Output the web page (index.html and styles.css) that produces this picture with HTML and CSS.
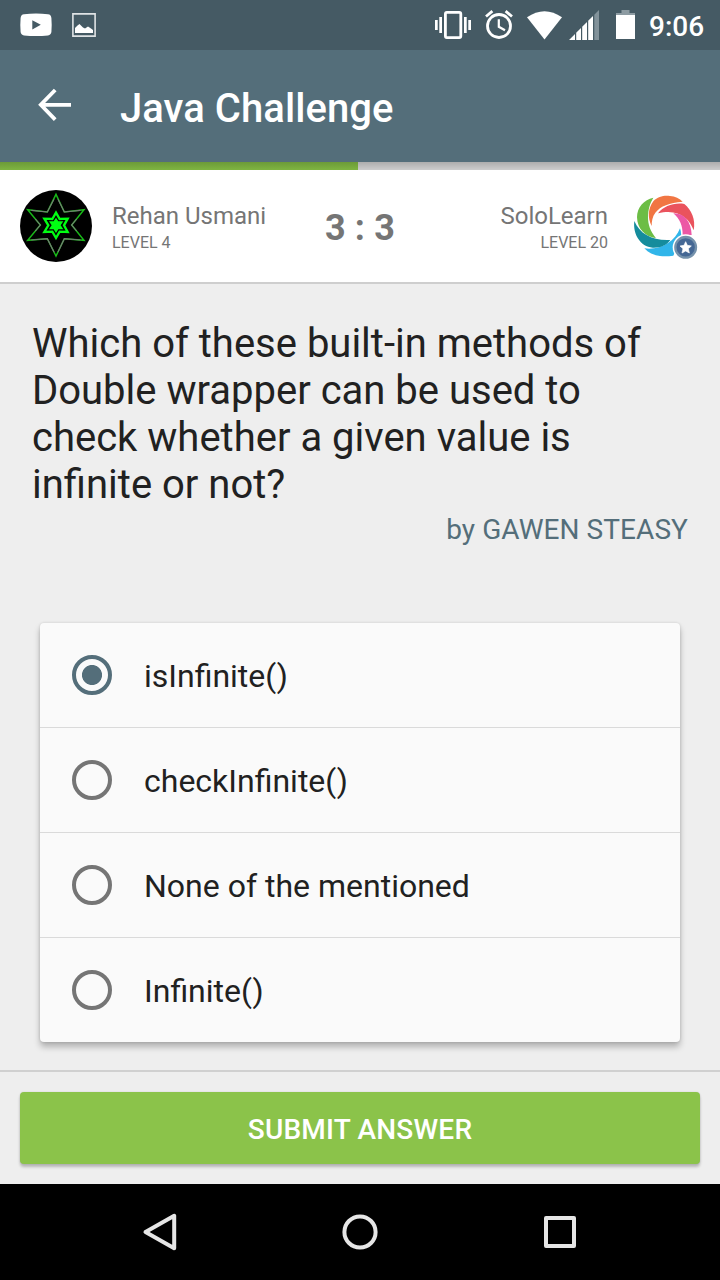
FILE: index.html
```html
<!DOCTYPE html>
<html lang="en">
<head>
<meta charset="utf-8">
<title>Java Challenge</title>
<link rel="stylesheet" href="styles.css">
</head>
<body>
<div class="status-bar">
  <svg class="icon-video" width="32" height="24" viewBox="0 0 32 24"><path fill="#fff" fill-rule="evenodd" d="M4 1.2Q16 0 28 1.2Q31 1.5 31.4 5Q32 12 31.4 19Q31 22 28 22.4Q16 23.4 4 22.4Q1 22 .6 19Q0 12 .6 5Q1 1.5 4 1.2ZM12.3 7.3V16.5L20.8 11.8Z"/></svg>
  <svg class="icon-picture" width="24" height="24" viewBox="0 0 24 24"><path fill="none" stroke="#dfe3e5" stroke-width="1.6" d="M.9.9H23.1V23.1H.9Z"/><path fill="#fff" d="M3 20V15L5.5 12.5L7.5 11L11 14.5L13 15.5L16 13.5L19 15.5L21 17V20Z"/></svg>
  <div class="status-right">
    <svg class="icon-vibrate" width="36" height="28" viewBox="0 0 36 28"><rect x="10.4" y="1.4" width="15.4" height="25.2" rx="1.5" fill="none" stroke="#fff" stroke-width="2.8"/><path fill="#fff" d="M0 9H2.7V19H0ZM4.3 6H7V22H4.3ZM29 6H31.7V22H29ZM33.3 9H36V19H33.3Z"/></svg>
    <svg class="icon-alarm" width="28" height="29" viewBox="0 0 28 29"><g fill="none" stroke="#fff"><circle cx="14" cy="16" r="11.5" stroke-width="2.8"/><path stroke-width="2.2" d="M13.8 9.2V16.8L20 20.3"/><path stroke-width="2.8" d="M1 6.5L7.4 1.2M20.6 1.2L27 6.5"/></g></svg>
    <svg class="icon-wifi" width="35" height="29" viewBox="0 0 35 29"><path fill="#fff" d="M0 6.2Q17.5-5.8 35 6.2L17.5 28.5Z"/></svg>
    <svg class="icon-signal" width="30" height="30" viewBox="0 0 30 30"><path fill="#fff" d="M0 30L6 24V30ZM7.2 22.8L12 18V30H7.2ZM13.2 16.8L18 12V30H13.2ZM19.2 10.8L24 6V30H19.2Z"/><path fill="#82929a" d="M25.3 4.7L30 0V30H25.3Z"/></svg>
    <svg class="icon-battery" width="19" height="30" viewBox="0 0 19 30"><path fill="#8d9ba2" d="M5.5 0H13.5V3H19V5.5H0V3H5.5Z"/><path fill="#fff" d="M0 5H19V29H0Z"/></svg>
    <span class="clock">9:06</span>
  </div>
</div>
<header class="app-bar">
  <svg class="icon-back" width="33" height="34" viewBox="0 0 33 34"><path fill="none" stroke="#fff" stroke-width="3.8" d="M17.2 2L2.8 16.8L17.2 31.6M3 16.8H33"/></svg>
  <h1 class="title">Java Challenge</h1>
</header>
<div class="progress"><div class="progress-fill"></div></div>
<section class="scoreboard">
  <svg class="avatar" width="72" height="72" viewBox="30 30 216 216">
    <circle cx="138" cy="138" r="108" fill="#000"/>
    <g fill="none" stroke-linejoin="miter">
      <path stroke="#18b818" stroke-width="4.5" d="M138 43L163 96L222 89L185 135L222 181L163 176L138 228L112 176L53 181L91 135L53 89L112 96Z"/>
      <path stroke="#777" stroke-width="3.4" d="M132 58L112 96L64 91M144 58L163 96L211 91M200 117L185 135L200 153M76 117L91 135L76 153M64 180L112 176L132 216M211 180L163 176L144 216"/>
      <path stroke="#00ff12" stroke-width="7" d="M138 98L149 117L173 116L162 136L173 156L149 155L138 174L127 155L103 156L115 136L103 116L127 117Z"/>
    </g>
    <path fill="#00ff12" d="M138 113L145 124L160 124L152 136L160 148L145 148L138 159L131 148L117 148L125 136L117 124L131 124Z"/>
  </svg>
  <div class="player">
    <div class="name">Rehan Usmani</div>
    <div class="level">LEVEL 4</div>
  </div>
  <div class="score">3 : 3</div>
  <div class="player player-right">
    <div class="name">SoloLearn</div>
    <div class="level">LEVEL 20</div>
  </div>
  <svg class="logo" width="68" height="68" viewBox="6 6 204 204">
    <path fill="#6cbd45" d="M70 23C42 29 21 51 21 82C22 118 46 140 78 145C61 123 54 105 54 82C54 58 60 40 70 23Z"/>
    <path fill="#f17643" d="M65 108C52 83 54 55 70 34C84 18 104 16 120 18C135 19 149 25 158 35C118 38 92 48 76 68C67 80 65 94 65 108Z"/>
    <path fill="#ea535d" d="M84 70C102 48 132 37 163 42C184 58 198 90 191 121C178 84 144 55 84 70Z"/>
    <path fill="#ec58a5" d="M130 70C162 69 184 94 185 135H158C158 108 150 87 130 70Z"/>
    <path fill="#31b5e9" d="M43 175C90 181 134 157 150 115Q157 134 150 151L130 197Q108 200 90 198C70 196 55 188 43 175Z"/>
    <path fill="#158c9c" d="M13 93C29 132 68 153 121 150C109 167 90 174 68 173C31 170 8 132 13 93Z"/>
    <circle cx="167" cy="172" r="39" fill="#fff"/>
    <circle cx="167" cy="172" r="31" fill="#456895" stroke="#7592ac" stroke-width="7"/>
    <path fill="#fff" stroke="#fff" stroke-width="2" stroke-linejoin="round" d="M167 155L172 166L184 168L175 176L178 189L167 183L156 189L159 176L150 168L162 166Z"/>
  </svg>
</section>
<main class="content">
  <p class="question">Which of these built-in methods of<br>Double wrapper can be used to<br>check whether a given value is<br>infinite or not?</p>
  <p class="author">by GAWEN STEASY</p>
  <div class="options">
    <div class="option"><span class="radio radio-selected"></span><span class="label">isInfinite<span class="parens">()</span></span></div>
    <div class="option"><span class="radio"></span><span class="label">checkInfinite<span class="parens">()</span></span></div>
    <div class="option"><span class="radio"></span><span class="label">None of the mentioned</span></div>
    <div class="option"><span class="radio"></span><span class="label">Infinite<span class="parens">()</span></span></div>
  </div>
</main>
<footer class="footer"><button class="submit">SUBMIT ANSWER</button></footer>
<nav class="nav-bar">
  <svg width="40" height="40" viewBox="0 0 40 40"><path class="nav-shape" d="M34.2 3.8V36.2L5.5 20Z"/></svg>
  <svg width="40" height="40" viewBox="0 0 40 40"><circle class="nav-shape" cx="20" cy="20" r="15.6"/></svg>
  <svg width="40" height="40" viewBox="0 0 40 40"><rect class="nav-shape" x="6" y="6" width="28" height="28"/></svg>
</nav>
</body>
</html>
```
FILE: styles.css
```css
* { box-sizing: border-box; }
body {
  margin: 0;
  width: 720px;
  height: 1280px;
  display: flex;
  flex-direction: column;
  overflow: hidden;
  background: #eee;
  color: #212121;
  font-family: Roboto, "Liberation Sans", sans-serif;
}
svg { display: block; flex: none; }
.status-bar {
  display: flex;
  align-items: flex-start;
  height: 50px;
  padding-left: 20px;
  background: #455a64;
}
.icon-video { margin-top: 13px; }
.icon-picture { margin: 13px 0 0 20px; }
.status-right { display: flex; margin-left: 339px; }
.icon-vibrate { margin-top: 11px; }
.icon-alarm { margin: 10px 0 0 14px; }
.icon-wifi { margin: 11px 0 0 14px; }
.icon-signal { margin: 10px 0 0 7px; }
.icon-battery { margin: 10px 0 0 17px; }
.clock {
  margin-left: 14px;
  color: #fff;
  font-size: 28px;
  font-weight: 500;
  line-height: 54px;
}
.app-bar {
  display: flex;
  align-items: center;
  height: 112px;
  padding-left: 38px;
  background: #546e7a;
}
.icon-back { margin-bottom: 2px; }
.title {
  margin: 6px 0 0 49px;
  color: #fff;
  font-size: 40px;
  font-weight: 500;
  line-height: 48px;
  letter-spacing: .06px;
}
.progress { height: 8px; background: linear-gradient(#adadad, #cdcdcd); }
.progress-fill { width: 358px; height: 8px; background: linear-gradient(#6c9a38, #7fb441); }
.scoreboard {
  display: flex;
  align-items: flex-start;
  height: 114px;
  padding: 20px 20px 0;
  border-bottom: 2px solid #cecece;
  background: #fff;
  color: #757575;
}
.player { width: 194px; margin: 11px 0 0 20px; }
.player-right { margin-left: 6px; text-align: right; }
.name { font-size: 24px; line-height: 30px; }
.level { font-size: 16px; line-height: 24px; }
.score {
  width: 102px;
  margin-top: 17px;
  padding-left: 6px;
  text-align: center;
  white-space: nowrap;
  font-size: 36px;
  font-weight: 700;
  line-height: 42px;
  letter-spacing: .15px;
}
.logo { margin: 2px 0 0 24px; }
.content { height: 786px; padding: 36px 32px 0; }
.question { margin: 0; font-size: 40px; line-height: 47px; white-space: nowrap; }
.author {
  margin: 6px 0 0;
  color: #546e7a;
  font-size: 28px;
  line-height: 32px;
  letter-spacing: .07px;
  text-align: right;
}
.options {
  margin: 77px 8px 0;
  border-radius: 4px;
  background: #fafafa;
  box-shadow: 0 5px 6px rgba(0, 0, 0, .25), 0 0 3px rgba(0, 0, 0, .14);
}
.option { display: flex; align-items: center; height: 105px; padding-left: 32px; }
.option:first-child { height: 104px; }
.option + .option { border-top: 1px solid #dadada; }
.radio { width: 40px; height: 40px; border: 4px solid #757575; border-radius: 50%; }
.radio-selected {
  border-color: #546e7a;
  background: radial-gradient(circle, #546e7a 9.6px, transparent 10.4px);
}
.label { margin: 2px 0 0 32px; font-size: 32px; line-height: 40px; }
.parens { letter-spacing: .5px; }
.footer { height: 114px; padding: 20px; border-top: 2px solid #d0d0d0; }
.submit {
  display: block;
  width: 100%;
  height: 72px;
  padding: 3px 0 0;
  border: 0;
  border-radius: 4px;
  background: #8bc34a;
  box-shadow: 0 3px 3px rgba(0, 0, 0, .23), 0 0 2px rgba(0, 0, 0, .12);
  color: #fff;
  font: 500 28px Roboto, sans-serif;
  letter-spacing: .2px;
}
.nav-bar {
  display: flex;
  justify-content: center;
  align-items: center;
  gap: 160px;
  height: 96px;
  background: #000;
}
.nav-shape { fill: none; stroke: #e6e6e6; stroke-width: 4; stroke-linejoin: round; }
```
